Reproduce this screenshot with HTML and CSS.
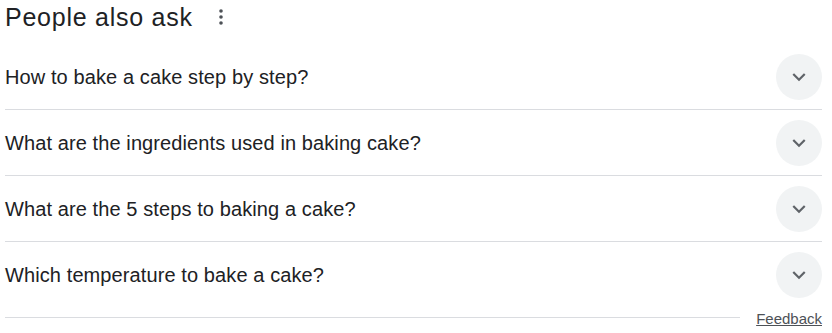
FILE: index.html
```html
<!DOCTYPE html>
<html lang="en">
<head>
<meta charset="utf-8">
<title>People also ask</title>
<link rel="stylesheet" href="styles.css">
</head>
<body>
<div class="paa">
  <div class="paa-head">
    <h2 class="paa-title">People also ask</h2>
    <svg class="more" width="8" height="20" viewBox="0 0 8 20" aria-hidden="true">
      <circle cx="4" cy="4" r="1.8"/>
      <circle cx="4" cy="10" r="1.8"/>
      <circle cx="4" cy="16" r="1.8"/>
    </svg>
  </div>
  <div class="row">
    <span class="q">How to bake a cake step by step?</span>
    <span class="btn"><svg width="26" height="26" viewBox="0 0 24 24"><path d="M16.59 8.59L12 13.17 7.41 8.59 6 10l6 6 6-6z"/></svg></span>
  </div>
  <div class="row">
    <span class="q">What are the ingredients used in baking cake?</span>
    <span class="btn"><svg width="26" height="26" viewBox="0 0 24 24"><path d="M16.59 8.59L12 13.17 7.41 8.59 6 10l6 6 6-6z"/></svg></span>
  </div>
  <div class="row">
    <span class="q">What are the 5 steps to baking a cake?</span>
    <span class="btn"><svg width="26" height="26" viewBox="0 0 24 24"><path d="M16.59 8.59L12 13.17 7.41 8.59 6 10l6 6 6-6z"/></svg></span>
  </div>
  <div class="row last">
    <span class="q">Which temperature to bake a cake?</span>
    <span class="btn"><svg width="26" height="26" viewBox="0 0 24 24"><path d="M16.59 8.59L12 13.17 7.41 8.59 6 10l6 6 6-6z"/></svg></span>
  </div>
  <div class="foot">
    <div class="foot-line"></div>
    <a class="feedback" href="#">Feedback</a>
  </div>
</div>
</body>
</html>
```

FILE: styles.css
```css
html, body {
  margin: 0;
  padding: 0;
  background: #ffffff;
}
body {
  font-family: "Liberation Sans", Arial, sans-serif;
  color: #202124;
}
.paa {
  width: 817px;
  margin-left: 5px;
}
.paa-head {
  height: 44px;
  display: flex;
  align-items: flex-start;
  padding-top: 1px;
  box-sizing: border-box;
}
.paa-title {
  margin: 0;
  font-size: 25px;
  font-weight: normal;
  line-height: 32px;
  letter-spacing: 0.75px;
  color: #202124;
}
.more {
  fill: #4d5156;
  margin-left: 24px;
  margin-top: 6px;
}
.row {
  height: 65px;
  display: flex;
  align-items: center;
  justify-content: space-between;
  border-bottom: 1px solid #dadce0;
}
.row.last {
  border-bottom: none;
}
.q {
  font-size: 20px;
  line-height: 24px;
  letter-spacing: 0.1px;
  color: #202124;
}
.btn {
  width: 46px;
  height: 46px;
  border-radius: 50%;
  background: #f1f3f4;
  display: flex;
  align-items: center;
  justify-content: center;
}
.btn svg {
  fill: #5f6368;
}
.foot {
  display: flex;
  align-items: flex-start;
  height: 26px;
}
.foot-line {
  flex: 1;
  border-top: 1px solid #dadce0;
  margin-top: 10px;
  margin-right: 16px;
}
.feedback {
  font-size: 15px;
  line-height: 18px;
  color: #4d5156;
  text-decoration: underline;
  margin-top: 3px;
}
```
